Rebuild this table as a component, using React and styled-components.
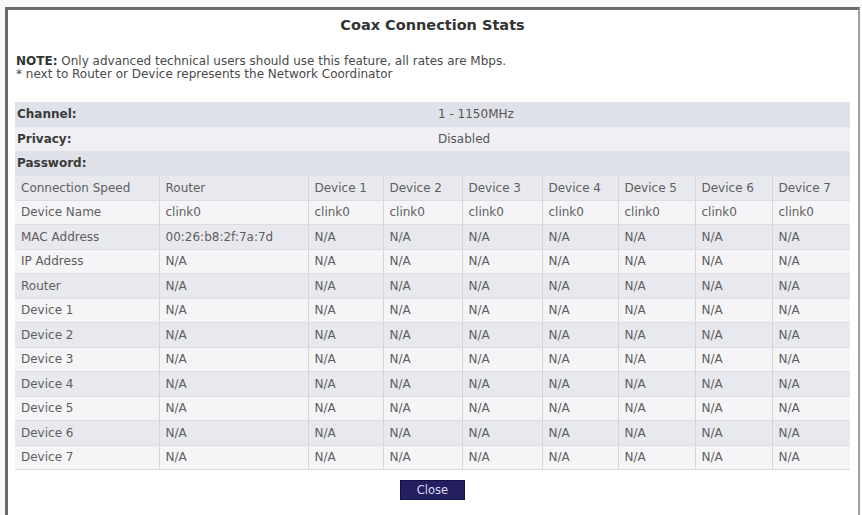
import React from "react";
import styled, { createGlobalStyle } from "styled-components";

const Global = createGlobalStyle`
  html, body { margin: 0; padding: 0; background: #fafafa; }
  body { font-family: "DejaVu Sans", Verdana, sans-serif; overflow: hidden; }
`;

const Frame = styled.div`
  margin: 7px 2px 0 5px;
  min-height: 530px;
  background: #ffffff;
  border-top: 3px solid #6a6a6a;
  border-left: 3px solid #6a6a6a;
  border-right: 2px solid #a0a0a0;
  padding: 6px 8px 0 7px;
  box-sizing: border-box;
`;

const Title = styled.h1`
  margin: 0;
  font-size: 14.5px;
  line-height: 18px;
  font-weight: bold;
  color: #333;
  text-align: center;
`;

const Note = styled.p`
  margin: 20.75px 0 0 1px;
  font-size: 12px;
  line-height: 13.5px;
  color: #4a4a4a;
  b { color: #333; }
`;

const InfoTable = styled.div`
  margin-top: 20.25px;
  width: 835px;
  display: grid;
  grid-template-columns: 417px 1fr;
`;

const InfoLabel = styled.div`
  height: 24.5px;
  display: flex;
  align-items: center;
  padding-left: 2px;
  font-size: 12px;
  font-weight: bold;
  color: #3a3a3a;
  background: ${(p) => (p.$alt ? "#eef0f4" : "#dfe1e8")};
`;

const InfoValue = styled.div`
  height: 24.5px;
  display: flex;
  align-items: center;
  padding-left: 6px;
  font-size: 12px;
  color: #555;
  background: ${(p) => (p.$alt ? "#eef0f4" : "#dfe1e8")};
`;

const Stats = styled.table`
  width: 835px;
  table-layout: fixed;
  border-collapse: collapse;
  border-bottom: 1px solid #c9cbd1;
`;

const Row = styled.tr`
  background: ${(p) => (p.$alt ? "#f5f5f7" : "#e8e9ee")};
`;

const Cell = styled.td`
  height: 24.5px;
  box-sizing: border-box;
  padding: 0 6px;
  font-size: 12px;
  color: #5e5e5e;
  white-space: nowrap;
  overflow: hidden;
  border-left: ${(p) => (p.$first ? "none" : "1px solid #d3d5db")};
  border-bottom: 1px solid #dcdde2;
`;

const Actions = styled.div`
  display: flex;
  justify-content: center;
  padding-top: 9.5px;
`;

const Button = styled.button`
  width: 65px;
  height: 20px;
  padding: 0;
  background: #241f60;
  border: 1px solid #15124a;
  color: #d8d8ee;
  font-family: "DejaVu Sans", Verdana, sans-serif;
  font-size: 11.5px;
  cursor: pointer;
`;

const widths = [144, 149, 75, 79, 80, 76, 77, 77, 78];
const devices = ["Device 1", "Device 2", "Device 3", "Device 4", "Device 5", "Device 6", "Device 7"];

const rows = [
  ["Connection Speed", "Router", ...devices],
  ["Device Name", "clink0", ...Array(7).fill("clink0")],
  ["MAC Address", "00:26:b8:2f:7a:7d", ...Array(7).fill("N/A")],
  ["IP Address", "N/A", ...Array(7).fill("N/A")],
  ["Router", "N/A", ...Array(7).fill("N/A")],
  ...devices.map((d) => [d, "N/A", ...Array(7).fill("N/A")]),
];

const info = [
  ["Channel:", "1 - 1150MHz"],
  ["Privacy:", "Disabled"],
  ["Password:", ""],
];

export default function App() {
  return (
    <>
      <Global />
      <Frame>
        <Title>Coax Connection Stats</Title>
        <Note>
          <b>NOTE:</b> Only advanced technical users should use this feature, all rates are Mbps.
          <br />* next to Router or Device represents the Network Coordinator
        </Note>
        <InfoTable>
          {info.map(([l, v], i) => (
            <React.Fragment key={l}>
              <InfoLabel $alt={i % 2 === 1}>{l}</InfoLabel>
              <InfoValue $alt={i % 2 === 1}>{v}</InfoValue>
            </React.Fragment>
          ))}
        </InfoTable>
        <Stats>
          <colgroup>
            {widths.map((w, i) => (
              <col key={i} style={{ width: w }} />
            ))}
          </colgroup>
          <tbody>
            {rows.map((r, i) => (
              <Row key={i} $alt={i % 2 === 1}>
                {r.map((c, j) => (
                  <Cell key={j} $first={j === 0}>
                    {c}
                  </Cell>
                ))}
              </Row>
            ))}
          </tbody>
        </Stats>
        <Actions>
          <Button>Close</Button>
        </Actions>
      </Frame>
    </>
  );
}
